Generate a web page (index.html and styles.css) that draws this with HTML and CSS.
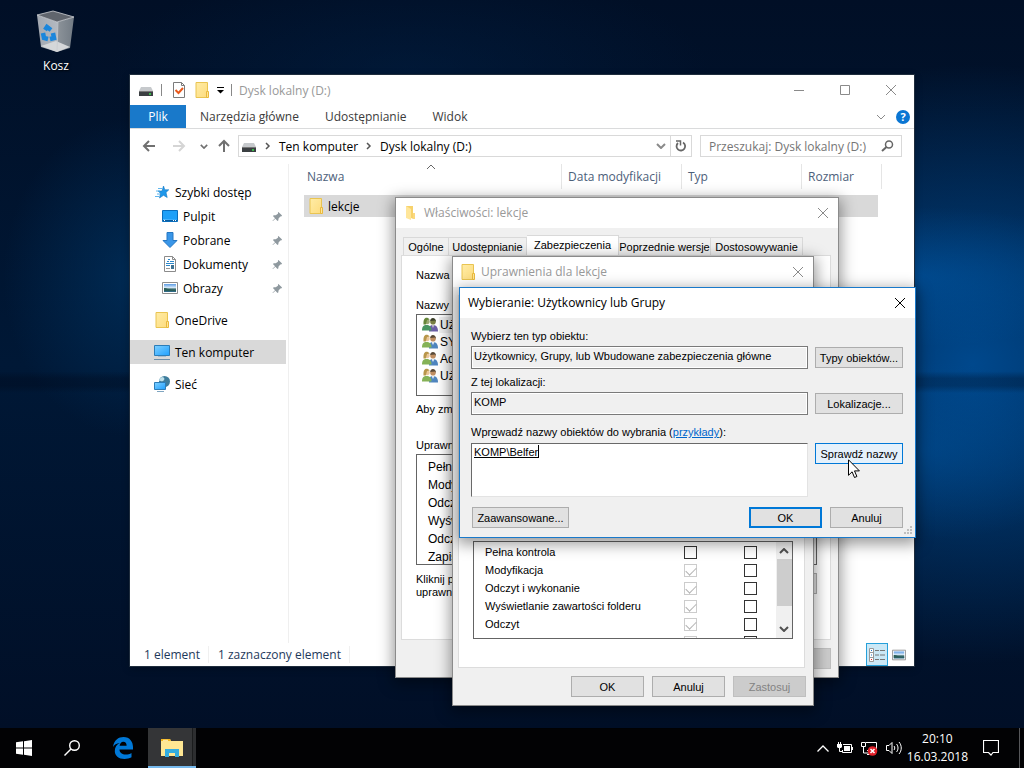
FILE: index.html
```html
<!DOCTYPE html>
<html lang="pl">
<head>
  <meta charset="UTF-8">
  <meta name="viewport" content="width=device-width, initial-scale=1.0">
  <title>Dysk lokalny (D:)</title>
  <link rel="stylesheet" href="styles.css">
</head>
<body>
  <!-- icon set -->
  <svg class="sprite" aria-hidden="true">
    <defs>
      <linearGradient id="gFolder" x1="0" y1="0" x2="1" y2="1"><stop offset="0" stop-color="#ffeca6"/><stop offset="1" stop-color="#fddc7e"/></linearGradient>
      <linearGradient id="gScreen" x1="0" y1="0" x2="1" y2="1"><stop offset="0" stop-color="#7fd0ff"/><stop offset="1" stop-color="#1fa0ff"/></linearGradient>
      <linearGradient id="gBin" x1="0" y1="0" x2="1" y2="0"><stop offset="0" stop-color="#a3a8b0"/><stop offset=".55" stop-color="#b3b9c1"/><stop offset=".57" stop-color="#8b9299"/><stop offset="1" stop-color="#727b84"/></linearGradient>
      <linearGradient id="gPic" x1="0" y1="0" x2="0" y2="1"><stop offset="0" stop-color="#5b9be4"/><stop offset=".5" stop-color="#e3f1fb"/><stop offset=".6" stop-color="#3d6b6a"/><stop offset="1" stop-color="#2d6a8c"/></linearGradient>
    </defs>
    <symbol id="folder" viewBox="0 0 16 16">
      <path d="M2 .5h11.5v15H2z" fill="url(#gFolder)" stroke="#e9c451"/>
      <path d="M12.5 9.5h2v6h-2z" fill="#ffe697" stroke="#e9b93c"/>
    </symbol>
    <symbol id="folder-open" viewBox="0 0 16 16">
      <path d="M3 1h7v12H3z" fill="#f7d26c"/>
      <path d="M3 1l5 3v11l-5-2z" fill="#ffe69a"/>
      <path d="M10 8h2v6H8l2-1z" fill="#fbd97f"/>
    </symbol>
    <symbol id="drive" viewBox="0 0 16 16">
      <path d="M3 5h10l2 4H1z" fill="#c6c9cc"/>
      <path d="M1 9h14v5H1z" fill="#3b3f42"/>
      <path d="M1 9h14v1H1z" fill="#777"/>
      <circle cx="12" cy="12" r="1" fill="#39e04b"/>
    </symbol>
    <symbol id="sheet-check" viewBox="0 0 16 16">
      <path d="M2.500 .5h8l3 3v12h-11z" fill="#fff" stroke="#7b7b7b"/>
      <path d="M10.500 .5v3h3" fill="none" stroke="#7b7b7b"/>
      <path d="M4.500 8l3 3 4.500-5" fill="none" stroke="#e8591c" stroke-width="2"/>
    </symbol>
    <symbol id="star" viewBox="0 0 16 16">
      <path d="M9.500 2l1.300 3.800h4L12 8.500l1.200 5-3.700-2.200L5.500 14l1-4.800L4 7h4z" fill="#1e97ea" stroke="#0f75c4" stroke-width=".6"/>
      <path d="M4 4.500h4M2 7h4M3 10h3M1 12.500h4" stroke="#5fb6ee"/>
    </symbol>
    <symbol id="desktop" viewBox="0 0 16 16">
      <path d="M.5 2.500h15v11H.5z" fill="url(#gScreen)" stroke="#0a6ebd"/>
      <path d="M1 3h14v8H1z" fill="#1ea0f8"/>
      <path d="M1 12.500h14" stroke="#0a5c9e"/>
      <path d="M2 12.500h1M11 12.500h1M13 12.500h1" stroke="#fff"/>
    </symbol>
    <symbol id="download" viewBox="0 0 16 16"><path d="M5 .5h6v8h4L8 15.500 1 8.500h4z" fill="#3a96e8" stroke="#2577c3"/></symbol>
    <symbol id="document" viewBox="0 0 16 16">
      <path d="M2.500 .5h8l3 3v12h-11z" fill="#fff" stroke="#8b8b8b"/>
      <path d="M10.500 .5v3h3" fill="none" stroke="#8b8b8b"/>
      <path d="M5 5.500h2M6 3.500h2M8 5.500h4M4 7.500h8M4 9.500h4" stroke="#2c87c9"/>
      <path d="M4 12.500h4" stroke="#999"/>
      <path d="M9 9h3v4H9z" fill="#3d7293"/>
    </symbol>
    <symbol id="picture" viewBox="0 0 16 16">
      <path d="M.5 2.500h15v11H.5z" fill="#fff" stroke="#8d8d8d"/>
      <path d="M2 4h12v8H2z" fill="url(#gPic)"/>
      <path d="M2 8c3 0 5 2 12 2v1H2z" fill="#2b5f5a"/>
    </symbol>
    <symbol id="computer" viewBox="0 0 16 16">
      <path d="M.5 1.500h15v10H.5z" fill="url(#gScreen)" stroke="#2c7db8"/>
      <path d="M4 12.500h8" stroke="#a9bccb"/><path d="M0 15.500h16" stroke="#6d8ea8"/>
    </symbol>
    <symbol id="network" viewBox="0 0 16 16">
      <circle cx="10.500" cy="5.500" r="5.500" fill="#3f7d9c"/>
      <path d="M8 1c3 0 3 3 1 4s-3-1-4 0c0-2 1-3 3-4z" fill="#bfe0ea"/>
      <path d="M.5 6.500h11v7H.5z" fill="url(#gScreen)" stroke="#2c7db8"/>
      <path d="M3 15.500h7" stroke="#7fa5c0"/>
    </symbol>
    <symbol id="pin" viewBox="0 0 12 12"><path d="M7 1l4 4-1 1H9L7 8.500V10L6 11 3.700 8.500 1 11l-.5-.5L3.300 7.800 1 5.500l1-1h2L6.500 3V1.500z" fill="#8f999f"/></symbol>
    <symbol id="users" viewBox="0 0 16 16">
      <path d="M7 14.500C7 9.500 8 8 11 8s5 2 5 6.500z" fill="#4f86c0"/>
      <path d="M9.500 8h3L11 11z" fill="#e6edf4"/>
      <circle cx="11" cy="4.800" r="2.800" fill="#c08e62"/>
      <path d="M8.200 4c0-4 6-4 5.800 1l-1-1.500z" fill="#5a4a38"/>
      <path d="M0 13.500C0 9.500 1.500 8 4.500 8s5 1.500 5 5.500z" fill="#85b257"/>
      <circle cx="5" cy="4.600" r="2.700" fill="#eac79a"/>
      <path d="M1.500 7.500C1 0 5-.5 7.800 2.500L5 3 3.800 7.500z" fill="#b8964a"/>
    </symbol>
    <symbol id="close" viewBox="0 0 12 12"><path d="M1 1l10 10M11 1L1 11" fill="none" stroke="currentColor"/></symbol>
    <symbol id="arrow-left" viewBox="0 0 14 12"><path d="M7 1L2 6l5 5M2 6h11" fill="none" stroke="currentColor" stroke-width="2"/></symbol>
    <symbol id="arrow-right" viewBox="0 0 14 12"><path d="M7 1l5 5-5 5M12 6H1" fill="none" stroke="currentColor" stroke-width="2"/></symbol>
    <symbol id="arrow-up" viewBox="0 0 12 14"><path d="M1 7l5-5 5 5M6 2v11" fill="none" stroke="currentColor" stroke-width="2"/></symbol>
    <symbol id="chev-down" viewBox="0 0 10 6"><path d="M1 1l4 4 4-4" fill="none" stroke="currentColor" stroke-width="2"/></symbol>
    <symbol id="chev-up" viewBox="0 0 10 6"><path d="M1 5l4-4 4 4" fill="none" stroke="currentColor" stroke-width="2"/></symbol>
    <symbol id="chev-right" viewBox="0 0 6 8"><path d="M1 1l3 3-3 3" fill="none" stroke="currentColor" stroke-width="1.500"/></symbol>
    <symbol id="sort" viewBox="0 0 10 6"><path d="M1 5l4-4 4 4" fill="none" stroke="currentColor"/></symbol>
  </svg>

  <main class="desktop">
    <a class="shortcut" href="#kosz">
      <svg width="40" height="43" viewBox="0 0 40 43">
        <path d="M1 5l20 7 17-5-4 31-13 4-16-5z" fill="url(#gBin)"/>
        <path d="M1 5l16-4 21 6-17 5z" fill="#60656d" stroke="#cfd2d6" stroke-width=".8"/>
        <path d="M5 36l15-5 14 6-13 5z" fill="#d5d7d9"/>
        <path d="M22 12l-1 29" stroke="#c5c9cd" stroke-width=".7"/>
        <g fill="none" stroke="#1a86dc" stroke-width="4.500"><path d="M9 20l2-3 4 3"/><path d="M7 23l1 5 4 1"/><path d="M14 29l4-1-1-5"/></g>
      </svg>
      <span>Kosz</span>
    </a>

    <!-- file explorer -->
    <section class="window explorer">
      <header class="explorer-title">
        <svg class="icon"><use href="#drive"/></svg>
        <i class="sep"></i>
        <svg class="icon"><use href="#sheet-check"/></svg>
        <svg class="icon"><use href="#folder"/></svg>
        <svg class="quick-menu" viewBox="0 0 7 7"><path d="M0 .5h7" stroke="#000"/><path d="M0 3h7L3.500 6.500z"/></svg>
        <i class="sep"></i>
        <h1>Dysk lokalny (D:)</h1>
        <button class="caption" aria-label="Minimalizuj"><svg width="12" height="12"><path d="M1 6.500h10" stroke="currentColor"/></svg></button>
        <button class="caption" aria-label="Maksymalizuj"><svg width="12" height="12"><path d="M1.500 1.500h9v9h-9z" fill="none" stroke="currentColor"/></svg></button>
        <button class="caption" aria-label="Zamknij"><svg width="12" height="12"><use href="#close"/></svg></button>
      </header>
      <nav class="ribbon">
        <a class="file" href="#plik">Plik</a>
        <a href="#narzedzia">Narzędzia główne</a>
        <a href="#udostepnianie">Udostępnianie</a>
        <a href="#widok">Widok</a>
        <button class="plain expand" aria-label="Rozwiń"><svg width="10" height="6"><use href="#sort" transform="rotate(180 5 3)"/></svg></button>
        <button class="help" aria-label="Pomoc">?</button>
      </nav>
      <div class="navbar">
        <div class="history">
          <button class="plain" aria-label="Wstecz"><svg width="14" height="12"><use href="#arrow-left"/></svg></button>
          <button class="plain" aria-label="Dalej" disabled><svg width="14" height="12"><use href="#arrow-right"/></svg></button>
          <button class="plain" aria-label="Ostatnie"><svg width="8" height="5"><use href="#chev-down"/></svg></button>
          <button class="plain" aria-label="W górę"><svg width="12" height="14"><use href="#arrow-up"/></svg></button>
        </div>
        <div class="address">
          <svg class="icon"><use href="#drive"/></svg>
          <svg class="crumb" width="6" height="8"><use href="#chev-right"/></svg>
          <a href="#komputer">Ten komputer</a>
          <svg class="crumb" width="6" height="8"><use href="#chev-right"/></svg>
          <a href="#dysk">Dysk lokalny (D:)</a>
          <button class="plain drop" aria-label="Poprzednie lokalizacje"><svg width="10" height="6"><use href="#chev-down"/></svg></button>
          <button class="plain refresh" aria-label="Odśwież"><svg width="12" height="12" viewBox="0 0 12 12"><path d="M3 3a4.300 4.300 0 1 0 5-.5" fill="none" stroke="currentColor" stroke-width="1.800"/><path d="M1 1h4.500v4.500" fill="none" stroke="currentColor" stroke-width="1.500"/></svg></button>
        </div>
        <div class="search">
          <input type="text" aria-label="Przeszukaj" placeholder="Przeszukaj: Dysk lokalny (D:)">
          <svg width="13" height="12" viewBox="0 0 13 12"><circle cx="8" cy="4.500" r="3.500" fill="none" stroke="#666" stroke-width="1.500"/><path d="M5.500 7L1 11" stroke="#666" stroke-width="2"/></svg>
        </div>
      </div>
      <div class="explorer-body">
        <aside class="tree">
          <a href="#szybki"><svg class="icon"><use href="#star"/></svg>Szybki dostęp</a>
          <a class="sub" href="#pulpit"><svg class="icon"><use href="#desktop"/></svg>Pulpit<svg class="pin"><use href="#pin"/></svg></a>
          <a class="sub" href="#pobrane"><svg class="icon"><use href="#download"/></svg>Pobrane<svg class="pin"><use href="#pin"/></svg></a>
          <a class="sub" href="#dokumenty"><svg class="icon"><use href="#document"/></svg>Dokumenty<svg class="pin"><use href="#pin"/></svg></a>
          <a class="sub" href="#obrazy"><svg class="icon"><use href="#picture"/></svg>Obrazy<svg class="pin"><use href="#pin"/></svg></a>
          <a class="group" href="#onedrive"><svg class="icon"><use href="#folder"/></svg>OneDrive</a>
          <a class="group selected" href="#ten"><svg class="icon"><use href="#computer"/></svg>Ten komputer</a>
          <a class="group" href="#siec"><svg class="icon"><use href="#network"/></svg>Sieć</a>
        </aside>
        <div class="files">
          <table>
            <thead>
              <tr>
                <th class="name">Nazwa<svg class="sort"><use href="#sort"/></svg></th>
                <th class="date">Data modyfikacji</th>
                <th class="type">Typ</th>
                <th class="size">Rozmiar</th>
              </tr>
            </thead>
            <tbody>
              <tr><td><div class="file-name"><svg class="icon"><use href="#folder"/></svg>lekcje</div></td><td></td><td></td><td></td></tr>
            </tbody>
          </table>
        </div>
      </div>
      <footer class="statusbar">
        <span>1 element</span>
        <span>1 zaznaczony element</span>
        <button class="view active" aria-label="Szczegóły"><svg width="16" height="14" viewBox="0 0 16 14"><path d="M.5 .5h4v13h-4zM.5 4.500h4M.5 9.500h4" fill="#fff" stroke="#999"/><path d="M6 2.500h4M11 2.500h5M6 7h4M11 7h5M6 11.500h4M11 11.500h5" stroke="#777"/><path d="M2 2h1v1H2zM2 6.500h1v1H2z" fill="#27c"/><path d="M2 11h1v1H2z" fill="#e22"/></svg></button>
        <button class="view" aria-label="Miniatury"><svg width="14" height="14"><use href="#picture"/></svg></button>
      </footer>
    </section>

    <!-- folder properties -->
    <section class="window dialog properties">
      <header class="dialog-title">
        <svg class="icon"><use href="#folder-open"/></svg>
        <h2>Właściwości: lekcje</h2>
        <button class="caption" aria-label="Zamknij"><svg width="12" height="12"><use href="#close"/></svg></button>
      </header>
      <div class="tabs">
        <button>Ogólne</button>
        <button class="mid">Udostępnianie</button>
        <button class="wide active">Zabezpieczenia</button>
        <button class="wide">Poprzednie wersje</button>
        <button class="wide">Dostosowywanie</button>
      </div>
      <div class="panel">
        <p class="object">Nazwa</p>
        <p>Nazwy g</p>
        <ul class="box users">
          <li class="selected"><svg class="icon"><use href="#users"/></svg><span>Uż</span></li>
          <li><svg class="icon"><use href="#users"/></svg><span>SY</span></li>
          <li><svg class="icon"><use href="#users"/></svg><span>Ad</span></li>
          <li><svg class="icon"><use href="#users"/></svg><span>Uż</span></li>
        </ul>
        <p class="hint">Aby zmi</p>
        <p>Uprawn</p>
        <ul class="box rights">
          <li>Pełna</li>
          <li>Mody</li>
          <li>Odcz</li>
          <li>Wyśw</li>
          <li>Odcz</li>
          <li>Zapis</li>
        </ul>
        <div class="advanced">
          <p>Kliknij p<br>uprawni</p>
          <button class="btn" aria-label="Zaawansowane"></button>
        </div>
      </div>
      <div class="actions"><button class="btn" disabled aria-label="Zastosuj"></button></div>
    </section>

    <!-- permissions of the folder -->
    <section class="window dialog permissions">
      <header class="dialog-title">
        <svg class="icon"><use href="#folder"/></svg>
        <h2>Uprawnienia dla lekcje</h2>
        <button class="caption" aria-label="Zamknij"><svg width="12" height="12"><use href="#close"/></svg></button>
      </header>
      <div class="panel">
        <div class="box grants">
          <table>
            <tr><td>Pełna kontrola</td><td><input type="checkbox" aria-label="Pełna kontrola: zezwalaj"></td><td><input type="checkbox" aria-label="Pełna kontrola: odmów"></td></tr>
            <tr><td>Modyfikacja</td><td><input type="checkbox" checked disabled aria-label="Modyfikacja: zezwalaj"></td><td><input type="checkbox" aria-label="Modyfikacja: odmów"></td></tr>
            <tr><td>Odczyt i wykonanie</td><td><input type="checkbox" checked disabled aria-label="Odczyt i wykonanie: zezwalaj"></td><td><input type="checkbox" aria-label="Odczyt i wykonanie: odmów"></td></tr>
            <tr><td>Wyświetlanie zawartości folderu</td><td><input type="checkbox" checked disabled aria-label="Wyświetlanie: zezwalaj"></td><td><input type="checkbox" aria-label="Wyświetlanie: odmów"></td></tr>
            <tr><td>Odczyt</td><td><input type="checkbox" checked disabled aria-label="Odczyt: zezwalaj"></td><td><input type="checkbox" aria-label="Odczyt: odmów"></td></tr>
            <tr><td></td><td><input type="checkbox" checked disabled aria-label="Zapis: zezwalaj"></td><td><input type="checkbox" aria-label="Zapis: odmów"></td></tr>
          </table>
          <div class="scrollbar">
            <svg width="10" height="6"><use href="#chev-up"/></svg>
            <i></i>
            <svg width="10" height="6"><use href="#chev-down"/></svg>
          </div>
        </div>
      </div>
      <div class="actions">
        <button class="btn">OK</button>
        <button class="btn">Anuluj</button>
        <button class="btn" disabled>Zastosuj</button>
      </div>
    </section>

    <!-- object picker -->
    <section class="window dialog picker">
      <header class="dialog-title">
        <h2>Wybieranie: Użytkownicy lub Grupy</h2>
        <button class="caption" aria-label="Zamknij"><svg width="12" height="12"><use href="#close"/></svg></button>
      </header>
      <form class="picker-form">
        <label for="objectType">Wybierz ten typ obiektu:</label>
        <div class="field-row">
          <input type="text" id="objectType" readonly value="Użytkownicy, Grupy, lub Wbudowane zabezpieczenia główne">
          <button type="button" class="btn">Typy obiektów...</button>
        </div>
        <label for="location">Z tej lokalizacji:</label>
        <div class="field-row">
          <input type="text" id="location" readonly value="KOMP">
          <button type="button" class="btn">Lokalizacje...</button>
        </div>
        <label class="names" for="names">Wpr<u>o</u>wadź nazwy obiektów do wybrania (<a href="#przyklady">przykłady</a>):</label>
        <div class="field-row top">
          <div class="names-box">
            <textarea id="names" spellcheck="false">KOMP\Belfer</textarea>
            <i class="caret"></i>
          </div>
          <button type="button" class="btn hot">Sprawdź nazwy</button>
        </div>
        <div class="picker-actions">
          <button type="button" class="btn wide">Zaawansowane...</button>
          <button type="button" class="btn default">OK</button>
          <button type="button" class="btn">Anuluj</button>
        </div>
      </form>
      <svg class="grip" width="9" height="9"><path d="M6 0h2v2H6zM3 3h2v2H3zM6 3h2v2H6zM0 6h2v2H0zM3 6h2v2H3zM6 6h2v2H6z" fill="#bfbfbf"/></svg>
    </section>

    <svg class="pointer" width="12" height="20" viewBox="0 0 12 20"><path d="M.5 .8v15.500l3.600-3.500 2.400 5.700 2.400-1-2.400-5.600h4.900z" fill="#fff" stroke="#000"/></svg>
  </main>

  <footer class="taskbar">
    <button class="task" aria-label="Start"><svg width="16" height="16" viewBox="0 0 16 16"><path d="M0 2.300L7 1.300v6.200H0zM8 1.200L16 0v7.500H8zM0 8.500h7v6.200l-7-1zM8 8.500h8V16l-8-1.200z" fill="#fff"/></svg></button>
    <button class="task" aria-label="Wyszukaj"><svg width="16" height="16" viewBox="0 0 16 16"><circle cx="10.500" cy="5.500" r="4.800" fill="none" stroke="#fff" stroke-width="1.400"/><path d="M7 9L.5 15.500" stroke="#fff" stroke-width="1.400"/></svg></button>
    <button class="task edge" aria-label="Microsoft Edge"><svg width="20" height="22" viewBox="0 0 20 22"><path d="M0 10C1 3 5.500 0 10.500 0 17 0 20 5 20 10v2.500H6.500c0 3.500 3 5 6 5 2.300 0 4.500-.7 6-1.600v4.400c-2 1.100-4.500 1.700-7 1.700C5.500 22 1.800 18.500 1.800 14c0-3.800 2-6.600 5-8C3.500 6.300 1.200 8 0 10zm6.600-1.200h7c0-2.500-1.200-4-3.300-4S7 6.500 6.600 8.800z" fill="#0078d7"/></svg></button>
    <button class="task running" aria-label="Eksplorator plików"><svg width="22" height="18" viewBox="0 0 22 18"><path d="M0 0h9l1 2h12v15H0z" fill="#ffe793"/><path d="M0 0h9l1 2H0z" fill="#f3b51d"/><path d="M2 .8h5v1H2z" fill="#fff3c8"/><path d="M4 18v-8h14v8h-4v-4H8v4z" fill="#34ade0"/></svg></button>
    <div class="tray">
      <svg width="12" height="7" viewBox="0 0 12 7"><path d="M.5 6.500L6 1l5.500 5.500" fill="none" stroke="#fff" stroke-width="1.300"/></svg>
      <svg width="16" height="12" viewBox="0 0 16 12"><path d="M0 2h5v3L4 6H1L0 5z" fill="#fff"/><path d="M1.500 0v2M3.500 0v2M2.500 6v3.500H5M6 2.500h8.500v8h-9V8M15.500 5v3" fill="none" stroke="#fff"/><path d="M7 4h6v5H7z" fill="#fff"/></svg>
      <svg width="17" height="15" viewBox="0 0 17 15"><path d="M5 1.500h10.500V9M.5 1.500h4v4h-4zM2.500 5v7H8M6 9.500h3M6 13.500h3" fill="none" stroke="#fff"/><circle cx="11.500" cy="10" r="4.800" fill="#e01f28"/><path d="M9.500 8l4 4M13.500 8l-4 4" stroke="#fff" stroke-width="1.500"/></svg>
      <svg width="17" height="14" viewBox="0 0 17 14"><path d="M.5 4.500H3L6 1.500v11L3 9.500H.5z" fill="none" stroke="#fff"/><path d="M8 5c1 1.200 1 2.800 0 4M10.500 3c2 2.300 2 5.700 0 8M13 1c3 3.500 3 8.500 0 12" fill="none" stroke="#fff"/></svg>
      <div class="clock"><time>20:10</time><time>16.03.2018</time></div>
      <svg width="16" height="16" viewBox="0 0 16 16"><path d="M.5 .5h15v12H10L8 15l-2.500-2.500h-5z" fill="none" stroke="#fff" stroke-width="1.200"/></svg>
      <i class="peek"></i>
    </div>
  </footer>
</body>
</html>
```
FILE: styles.css
```css
* {
  box-sizing: border-box;
}

body {
  margin: 0;
  height: 100vh;
  display: flex;
  flex-direction: column;
  overflow: hidden;
  font-family: "Open Sans", "Noto Sans", sans-serif;
  font-size: 12px;
  color: #000;
  background-color: #00122c;
}

h1, h2, p, ul {
  margin: 0;
  padding: 0;
  font-size: 12px;
  font-weight: normal;
}

ul {
  list-style: none;
}

a {
  color: inherit;
  text-decoration: none;
}

button, input, textarea {
  font: inherit;
  margin: 0;
  border-radius: 0;
}

svg {
  flex: none;
}

.sprite {
  position: absolute;
  width: 0;
  height: 0;
}

.icon {
  width: 16px;
  height: 16px;
}

/* desktop */
.desktop {
  position: relative;
  flex: 1;
  background:
    radial-gradient(ellipse 200px 70px at 90% 38%, rgba(0, 98, 184, 0.4), transparent),
    radial-gradient(ellipse 170px 90px at 90% 62%, rgba(0, 92, 172, 0.35), transparent),
    linear-gradient(transparent 51%, rgba(0, 5, 20, 0.3) 52%, rgba(0, 5, 20, 0.3) 53%, transparent 54%),
    radial-gradient(ellipse 330px 300px at 95% 50%, rgba(0, 84, 162, 0.8), transparent),
    radial-gradient(ellipse 130px 160px at 13% 38%, rgba(0, 56, 106, 0.6), transparent),
    radial-gradient(ellipse 300px 110px at 40% 10%, rgba(0, 36, 76, 0.4), transparent),
    linear-gradient(#010f26, #001836 50%, #010f27);
}

.shortcut {
  position: absolute;
  left: 18px;
  top: 10px;
  width: 76px;
  display: flex;
  flex-direction: column;
  align-items: center;
  gap: 4px;
  color: #fff;
  text-shadow: 1px 1px 2px #000;
}

.window {
  position: absolute;
  display: flex;
  flex-direction: column;
  background: #fff;
}

.caption, .plain, .view {
  display: flex;
  align-items: center;
  justify-content: center;
  padding: 0;
  border: 0;
  background: none;
  color: #8a8a8a;
}

/* explorer */
.explorer {
  left: 130px;
  right: 110px;
  top: 75px;
  bottom: 62px;
  box-shadow: 0 0 0 1px #1f2d3d, 0 2px 8px rgba(0, 0, 0, 0.3);
}

.explorer-title {
  display: flex;
  align-items: center;
  height: 30px;
  padding-left: 8px;
  gap: 7px;
  color: #999;
}

.explorer-title h1 {
  flex: 1;
}

.explorer-title .caption {
  width: 46px;
  height: 28px;
  margin-left: -7px;
}

.sep {
  width: 1px;
  height: 12px;
  margin-right: 2px;
  background: #888;
}

.explorer-title .sep ~ .sep {
  margin-right: 0;
}

.quick-menu {
  width: 7px;
  height: 7px;
}

.ribbon {
  display: flex;
  align-items: center;
  height: 24px;
  border-bottom: 1px solid #dadbdc;
  padding-right: 4px;
  color: #3b3b3b;
}

.ribbon a {
  padding: 0 12px 0 14px;
  line-height: 23px;
}

.ribbon .file {
  width: 56px;
  padding: 0;
  text-align: center;
  color: #fff;
  background: #1979ca;
}

.expand {
  margin-left: auto;
}

.help {
  width: 14px;
  height: 14px;
  margin-left: 10px;
  padding: 0;
  border: 0;
  border-radius: 50%;
  background: #0a76d3;
  color: #fff;
  font-size: 11px;
  font-weight: bold;
  line-height: 14px;
}

.navbar {
  display: flex;
  padding: 6px 12px 7px;
  gap: 8px;
}

.history {
  display: flex;
  align-items: center;
  gap: 12px;
}

.history .plain {
  color: #707070;
}

.history .plain:disabled {
  margin: 0 2px 0 4px;
  color: #d5d5d5;
}

.history .plain:last-child {
  margin-left: -2px;
}

.address {
  flex: 1;
  display: flex;
  align-items: center;
  height: 22px;
  padding-left: 2px;
  border: 1px solid #d9d9d9;
}

.crumb {
  margin: 0 8px;
  color: #555;
}

.drop {
  width: 18px;
  margin-left: auto;
}

.refresh {
  width: 21px;
  height: 20px;
  border-left: 1px solid #d9d9d9;
  color: #666;
}

.search {
  display: flex;
  align-items: center;
  width: 202px;
  height: 22px;
  padding: 0 7px;
  border: 1px solid #d9d9d9;
}

.search input {
  flex: 1;
  min-width: 0;
  padding: 0 1px;
  border: 0;
  outline: 0;
}

.search input::placeholder {
  color: #757575;
}

.explorer-body {
  flex: 1;
  display: flex;
}

.tree {
  width: 159px;
  padding: 16px 2px 0 0;
  border-right: 1px solid #efefef;
}

.tree a {
  display: flex;
  align-items: center;
  gap: 5px;
  height: 24px;
  padding-left: 24px;
}

.tree .sub {
  padding-left: 32px;
}

.tree .group {
  margin-top: 8px;
}

.tree .selected {
  background: #d9d9d9;
}

.pin {
  width: 11px;
  height: 11px;
  margin-left: auto;
  margin-right: 3px;
}

.pin use {
  width: 11px;
  height: 11px;
}

.files {
  padding-left: 15px;
}

.files table {
  width: 578px;
  border-spacing: 0;
  table-layout: fixed;
}

.files th {
  position: relative;
  height: 25px;
  padding: 0 0 0 6px;
  border-right: 1px solid #e5e5e5;
  color: #4c607a;
  font-weight: normal;
  text-align: left;
}

.files .name {
  width: 258px;
  padding-left: 3px;
}

.files .date, .files .type {
  width: 120px;
}

.files td {
  padding: 0;
  background: #d9d9d9;
}

.files td:last-child {
  border-right: 4px solid #fff;
}

.files tbody::before {
  content: "";
  display: block;
  height: 6px;
}

.sort {
  position: absolute;
  left: 122px;
  top: 0;
  width: 10px;
  height: 6px;
  color: #666;
}

.file-name {
  display: flex;
  align-items: center;
  gap: 4px;
  height: 22px;
  padding-left: 4px;
}

.statusbar {
  display: flex;
  align-items: center;
  height: 23px;
  padding: 0 4px 0 14px;
  color: #1e395b;
}

.statusbar span {
  margin-right: 9px;
  padding-right: 8px;
  border-right: 1px solid #f0f0f0;
}

.view {
  width: 22px;
  height: 23px;
}

.view.active {
  margin-left: auto;
  border: 1px solid #26a0da;
  background: #cbe8f6;
}

/* dialogs */
.dialog {
  font-family: "Liberation Sans", Arial, sans-serif;
  font-size: 11px;
  line-height: 14px;
  border: 1px solid #8b8b8b;
  background: #f0f0f0;
  box-shadow: 0 4px 14px 2px rgba(0, 0, 0, 0.4);
}

.dialog p {
  font-size: 11px;
}

.dialog-title {
  display: flex;
  align-items: center;
  gap: 4px;
  height: 30px;
  padding-left: 7px;
  background: #fff;
  color: #999;
  font-family: "Open Sans", "Noto Sans", sans-serif;
}

.dialog-title h2 {
  flex: 1;
  padding-left: 1px;
}

.dialog-title .caption {
  width: 30px;
  height: 30px;
}

.panel {
  margin: 0 7px 0 5px;
  border: 1px solid #dcdcdc;
  background: #fff;
}

.box {
  border: 1px solid #646464;
  background: #fff;
  overflow: hidden;
}

.btn {
  width: 73px;
  height: 21px;
  padding: 0;
  border: 1px solid #adadad;
  background: #e1e1e1;
  color: #000;
}

.btn:disabled {
  border-color: #bfbfbf;
  background: #cccccc;
  color: #838383;
}

.actions {
  display: flex;
  justify-content: flex-end;
  gap: 8px;
  padding: 8px 7px;
}

.properties {
  left: 395px;
  top: 197px;
  width: 444px;
}

.tabs {
  display: flex;
  align-items: flex-end;
  padding: 7px 7px 0;
  margin-bottom: -1px;
}

.tabs button {
  width: 46px;
  height: 19px;
  padding: 0;
  border: 1px solid #d9d9d9;
  border-bottom: 0;
  border-left-width: 0;
  background: #f0f0f0;
  white-space: nowrap;
}

.tabs .mid {
  width: 78px;
}

.tabs .wide {
  width: 92px;
}

.tabs button:first-child {
  border-left-width: 1px;
}

.tabs .active {
  height: 21px;
  padding-bottom: 2px;
  background: #fff;
}

.properties .panel {
  padding: 12px 13px 40px 14px;
}

.object {
  margin-bottom: 16px;
}

.users {
  height: 82px;
  margin: 2px 0 6px;
  padding: 1px 5px;
}

.users li {
  display: flex;
  align-items: center;
  gap: 1px;
  height: 17px;
}

.users span {
  padding: 1px;
}

.users .selected span {
  background: #f0f0f0;
}

.users .selected .icon {
  filter: hue-rotate(40deg) brightness(0.8);
}

.hint {
  margin-bottom: 22px;
}

.rights {
  margin-top: 2px;
  height: 111px;
  padding: 3px 11px;
  line-height: 18px;
}

.advanced {
  display: flex;
  justify-content: space-between;
  margin-top: 8px;
  line-height: 13px;
}

.properties .panel .btn {
  width: 90px;
}

.permissions {
  left: 452px;
  top: 256px;
  width: 362px;
}

.permissions .panel {
  display: flex;
  flex-direction: column;
  justify-content: flex-end;
  min-height: 373px;
  margin: 8px 8px 0 5px;
  padding: 0 11px 28px 14px;
}

.grants {
  display: flex;
  height: 98px;
}

.grants table {
  flex: 1;
  border-spacing: 0;
  table-layout: fixed;
  height: 108px;
  margin-top: 1px;
}

.grants td {
  width: 60px;
  height: 18px;
  padding: 0;
}

.grants td:first-child {
  width: auto;
  padding-left: 11px;
}

.grants input {
  display: block;
  appearance: none;
  width: 13px;
  height: 13px;
  margin: 0 0 0 28px;
  border: 1px solid #333;
  background: #fff;
}

.grants input:disabled {
  border-color: #ccc;
}

.grants input:checked::after {
  content: "";
  display: block;
  width: 9px;
  height: 5px;
  margin: 2px 1px;
  border: solid #b4b4b4;
  border-width: 0 0 1px 1px;
  transform: rotate(-45deg);
}

.scrollbar {
  display: flex;
  flex-direction: column;
  align-items: center;
  width: 16px;
  padding: 6px 0;
  background: #f0f0f0;
  color: #505050;
}

.scrollbar i {
  width: 15px;
  height: 47px;
  margin: 5px 0 auto;
  background: #cdcdcd;
}

.picker {
  left: 459px;
  top: 287px;
  width: 457px;
  border-color: #1979ca;
}

.picker .dialog-title, .picker .caption {
  color: #000;
}

.picker-form {
  display: flex;
  flex-direction: column;
  padding: 11px 12px 9px 11px;
}

.picker-form label {
  margin-bottom: 3px;
}

.picker-form a {
  color: #0066cc;
  text-decoration: underline;
}

.field-row {
  display: flex;
  align-items: center;
  gap: 7px;
  margin-bottom: 6px;
}

.picker-form .names {
  margin-top: 4px;
  margin-bottom: 4px;
}

.field-row.top {
  align-items: flex-start;
  margin-bottom: 10px;
}

.field-row .btn {
  width: 88px;
}

.field-row input {
  flex: 1;
  height: 23px;
  padding: 0 2px 3px;
  border: 1px solid #7a7a7a;
  background: #f0f0f0;
  box-shadow: inset 0 0 0 1px #fff;
}

.names-box {
  position: relative;
  flex: 1;
  height: 54px;
}

.names-box textarea {
  display: block;
  width: 100%;
  height: 54px;
  padding: 1px 2px;
  border: 1px solid #e3e3e3;
  border-top-color: #696969;
  border-left-color: #696969;
  resize: none;
  outline: 0;
  overflow: hidden;
  line-height: 14px;
  text-decoration: underline;
}

.caret {
  position: absolute;
  left: 67px;
  top: 2px;
  width: 1px;
  height: 13px;
  background: #000;
}

.field-row .hot {
  border-color: #0078d7;
  background: #e5f1fb;
}

.picker-actions {
  display: flex;
  gap: 8px;
}

.picker-actions .wide {
  width: 97px;
  margin-left: 1px;
  margin-right: auto;
}

.picker-actions .default {
  border: 2px solid #0078d7;
}

.grip {
  position: absolute;
  right: 2px;
  bottom: 2px;
}

.pointer {
  position: absolute;
  left: 848px;
  top: 459px;
}

/* taskbar */
.taskbar {
  display: flex;
  height: 40px;
  background: #020204;
  color: #fff;
}

.task {
  display: flex;
  align-items: center;
  justify-content: center;
  width: 48px;
  padding: 0;
  border: 0;
  background: none;
}

.task.edge {
  width: 52px;
  padding-left: 2px;
}

.task.running {
  width: 48px;
  padding-top: 2px;
  padding-right: 1px;
  border-bottom: 2px solid #76b9ed;
  background: linear-gradient(90deg, #343537 44px, #1b1c1d 44px, #1b1c1d 45px, #2d2e30 45px);
}

.tray {
  display: flex;
  align-items: center;
  gap: 8px;
  margin-left: auto;
}

.clock {
  display: flex;
  flex-direction: column;
  align-items: center;
  margin-left: -4px;
  line-height: 18px;
}

.tray .clock + svg {
  margin-left: 7px;
}

.peek {
  align-self: stretch;
  width: 5px;
  margin-left: 12px;
  border-left: 1px solid #56575a;
}
```
